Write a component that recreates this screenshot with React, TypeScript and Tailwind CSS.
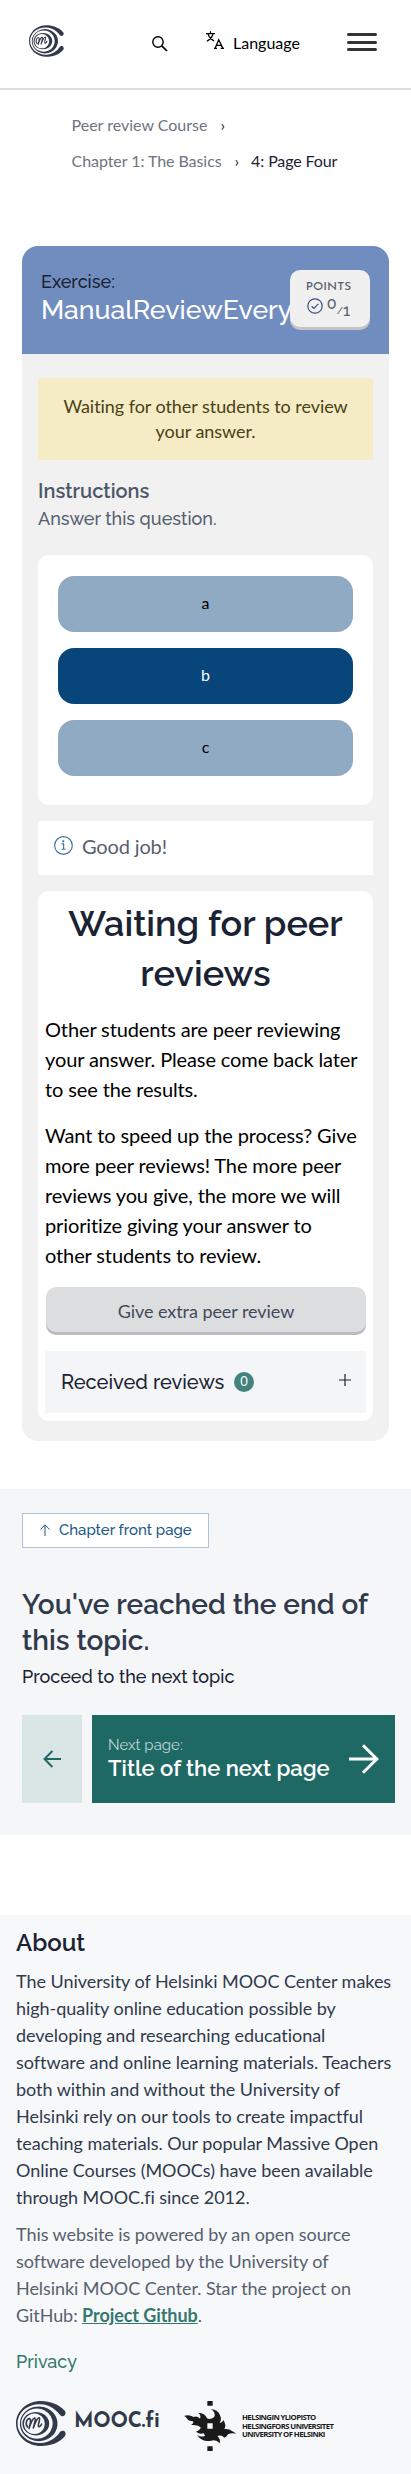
import React from "react";

function MoocMark({ className }: { className: string }) {
  return (
    <svg viewBox="0 0 50 45" className={className} fill="#303a4b" aria-hidden="true">
      <path d="M48.5 14.5 C50 13 49.8 11 48.5 9.5 C43 3.5 34 0 25 0 C11 0 0 10 0 22.5 C0 35 11 45 25 45 C35 45 44 41.5 49 35 C50.2 33 49.6 31 48 30 C46.3 29.2 44.6 30 43.6 31.5 C39.5 37.5 33 41.6 25 42 C12 42.6 1.6 33.5 1.6 22.5 C1.6 11 12 2.6 25 3.2 C33 3.6 39.5 8 43.6 13.4 C45 15.2 47 15.8 48.5 14.5 Z" />
      <path fillRule="evenodd" d="M22.7 5.4 a18.8 17.4 0 1 0 .01 0 Z M20.9 7.4 a15.8 15.2 0 1 1 -.01 0 Z" />
      <path fillRule="evenodd" d="M19.8 11 a13.4 11.7 0 1 0 .01 0 Z M18.4 12.6 a10.4 10.2 0 1 1 -.01 0 Z" />
      <path d="M11.5 26 C8.8 23 10.8 17.5 13.5 17.5 C15.5 18 14.2 23 13 27.5 C14.5 22.5 17.2 16.5 18.8 17 C20.3 17.8 18 23 17.3 27 C18.8 22.5 21.6 16.2 23.3 16.8 C24.8 18 21.2 24.5 22.6 25.6 C23.5 26.2 24.8 24.8 25.6 23" fill="none" stroke="#303a4b" strokeWidth="1.6" strokeLinecap="round" strokeLinejoin="round" />
    </svg>
  );
}

function HelsinkiMark() {
  return (
    <svg viewBox="39 63 156 150" className="h-[50px] w-[52px]" fill="#1a1a1a" aria-hidden="true">
      <path d="M109 63h16v14h-16zM109 199h16v14h-16z" />
      <path
        fillRule="evenodd"
        d="M39 108 Q54 103 68 111 Q78 107 87 116 Q91 106 82 98 Q102 99 108 115 Q118 120 130 111 Q135 98 120 87 Q141 89 147 106 Q153 118 146 129 Q155 128 157 120 Q167 134 160 147 Q176 146 184 154 Q190 156 195 161 Q181 158 171 163 Q168 170 160 173 Q152 164 139 168 Q150 178 146 190 Q136 178 121 182 Q94 188 78 165 Q92 173 102 167 L98 160 Q85 164 75 155 Q88 151 89 142 Q78 133 60 135 Q69 130 66 124 Q52 124 47 114 Q44 110 39 108 Z M109 130 v16 h16 v-16 Z"
      />
    </svg>
  );
}

const options = [
  { label: "a", selected: false },
  { label: "b", selected: true },
  { label: "c", selected: false },
];

function Header() {
  return (
    <header className="flex h-[90px] border-b-2 border-[#dddddd] pl-[29px]">
      <MoocMark className="mt-[25px] h-8 w-[35px]" />
      <svg viewBox="0 0 16 16" className="ml-[88px] mt-9 size-4" fill="none" stroke="#000" strokeWidth="1.4">
        <circle cx="6" cy="6" r="5.2" />
        <path d="M9.8 9.8L15 15" strokeWidth="1.7" />
      </svg>
      <svg viewBox="0 0 18 18" className="ml-[38px] mt-[31px] size-[18px]" fill="none" stroke="#000" strokeWidth="1.2">
        <path d="M0 2.6H9M4.5 .3V2.6M1.9 2.8C3 6.4 5.2 8.6 8.2 10M7.1 2.8C6 6.4 4 8.8 .8 10.2" />
        <path d="M9 17.4L12.7 8.8L16.9 17.4M10.2 14.4H15.2M8 17.3H11M14.6 17.3H18" strokeWidth="1.3" />
      </svg>
      <span className="ml-[9px] mt-[31px] w-[114px] text-[16px] leading-6 text-black">Language</span>
      <div className="mt-[33px] flex h-[18px] w-[30px] flex-col justify-between">
        <i className="h-[3px] rounded-full bg-[#333]" />
        <i className="h-[3px] rounded-full bg-[#333]" />
        <i className="h-[3px] rounded-full bg-[#333]" />
      </div>
    </header>
  );
}

function Breadcrumbs() {
  return (
    <nav className="flex h-[156px] flex-col pl-[71.5px] pt-[17px] text-[16px] leading-9 text-[#6d7480]">
      <div className="flex">
        <span>Peer review Course</span>
        <span className="ml-[13px] text-[#1a2333]">›</span>
      </div>
      <div className="flex">
        <span className="tracking-[-0.06px]">Chapter 1: The Basics</span>
        <span className="ml-[13px] text-[#1a2333]">›</span>
        <span className="ml-3 tracking-[-0.12px] text-[#1a2333]">4: Page Four</span>
      </div>
    </nav>
  );
}

function ExerciseHeader() {
  return (
    <div className="flex h-[108px] bg-[#718dbf] pl-5 pt-6 font-['Raleway','Lato',sans-serif]">
      <div className="w-[248px] shrink-0 whitespace-nowrap pt-px">
        <div className="-ml-px text-[18px] font-medium leading-[22px] text-[#1a2333]">Exercise:</div>
        <div className="-ml-px text-[26.6px] font-medium leading-[34px] text-white">ManualReviewEveryone</div>
      </div>
      <div className="relative flex h-[57px] w-20 shrink-0 flex-col items-center rounded-[10px] bg-[#f0f0f0] pr-[3px] pt-[9px] font-medium text-[#57606f] shadow-[0_3px_0_#c4c4c4]">
        <span className="font-['Josefin_Sans','Lato',sans-serif] text-[12px] leading-4">POINTS</span>
        <div className="mt-[3px] flex h-5">
          <svg viewBox="0 0 16 16" className="size-4" fill="none" stroke="#394f82" strokeWidth="1.2">
            <circle cx="8" cy="8" r="7.2" />
            <path d="M4.6 8.2L7 10.4L11.4 5.8" />
          </svg>
          <span className="-mt-0.5 ml-1 text-[16px] leading-4">0</span>
          <span className="pt-[5px] text-[10px] leading-4">/</span>
          <span className="pt-[5px] text-[16px] leading-4">1</span>
        </div>
      </div>
    </div>
  );
}

function PeerReviewPanel() {
  return (
    <div className="mt-4 h-[530px] rounded-[10px] bg-white px-[7px] pt-[7px]">
      <h2 className="text-center font-['Raleway','Lato',sans-serif] text-[36px] font-semibold leading-[50px] text-[#1a2333]">
        Waiting for peer
        <br />
        reviews
      </h2>
      <div className="mt-4 whitespace-nowrap text-[20px] leading-[30px] tracking-[-0.12px] text-black">
        <p>
          Other students are peer reviewing
          <br />
          your answer. Please come back later
          <br />
          to see the results.
        </p>
        <p className="mt-4">
          Want to speed up the process? Give
          <br />
          more peer reviews! The more peer
          <br />
          reviews you give, the more we will
          <br />
          prioritize giving your answer to
          <br />
          other students to review.
        </p>
      </div>
      <button className="ml-px mt-[17px] block h-[45px] w-80 rounded-[10px] bg-[#dcdddf] pt-[3px] text-[18px] tracking-[-0.06px] text-[#414b5b] shadow-[0_3px_0_#babbc5]">
        Give extra peer review
      </button>
      <div className="mt-[19px] flex h-[62px] items-center bg-[#f4f5f7] pl-4 pr-[15px]">
        <span className="w-[165px] font-['Raleway','Lato',sans-serif] text-[20px] font-medium text-[#1a2333]">Received reviews</span>
        <span className="ml-2 flex size-5 items-center justify-center rounded-full bg-[#44827d] pb-[3px] text-[13px] leading-5 text-white">0</span>
        <svg viewBox="0 0 12 12" className="mb-1 ml-auto size-3" stroke="#1a2333" strokeWidth="1.2">
          <path d="M6 0V12M0 6H12" />
        </svg>
      </div>
    </div>
  );
}

function Exercise() {
  return (
    <section className="mx-[22px] h-[1195px] overflow-hidden rounded-2xl bg-[#f1f1f1]">
      <ExerciseHeader />
      <div className="px-4 pt-6">
        <div className="flex h-[82px] items-center justify-center rounded-[3px] bg-[#f5ecc5] text-center text-[18px] leading-[25.4px] tracking-[-0.05px] text-[#4a4115]">
          <p>
            Waiting for other students to review
            <br />
            your answer.
          </p>
        </div>
        <h3 className="mt-4 font-['Raleway','Lato',sans-serif] text-[20px] font-semibold leading-[30px] text-[#4c5868]">
          Instructions
        </h3>
        <p className="font-['Raleway','Lato',sans-serif] text-[18px] font-medium leading-[25px] text-[#57606f]">
          Answer this question.
        </p>
        <div className="mt-6 flex h-[250px] flex-col gap-4 rounded-[10px] bg-white px-5 pt-[21px]">
          {options.map((option) => (
            <button
              key={option.label}
              className={
                option.selected
                  ? "h-14 shrink-0 rounded-2xl bg-[#08457a] pb-0.5 text-[16px] text-white"
                  : "h-14 shrink-0 rounded-2xl bg-[#91aac4] pb-0.5 text-[16px] text-black"
              }
            >
              {option.label}
            </button>
          ))}
        </div>
        <div className="mt-4 flex h-[54px] bg-white pl-4 pt-[15px]">
          <svg viewBox="0 0 20 20" className="-ml-px size-[19px] overflow-visible" fill="none" stroke="#3b6fa3" strokeWidth="1.2">
            <circle cx="11" cy="10" r="9.3" />
            <path d="M9 8.3H11.2V14M9 14H13.2" />
            <circle cx="10.8" cy="5.6" r=".6" fill="#3b6fa3" />
          </svg>
          <span className="-mt-0.5 ml-2.5 text-[20px] leading-6 tracking-[-0.15px] text-[#57606f]">Good job!</span>
        </div>
        <PeerReviewPanel />
      </div>
    </section>
  );
}

function NextTopic() {
  return (
    <section className="mt-12 h-[346px] bg-[#f5f6f8] pl-[22px] pr-4 pt-6 font-['Raleway','Lato',sans-serif]">
      <a className="flex h-[35px] w-[187px] items-center border border-[#aec3d8] bg-white pl-[17px] text-[15px] font-medium text-[#215887]">
        <svg viewBox="0 0 10 12" className="mb-0.5 mr-[9px] h-3 w-2.5" fill="none" stroke="#215887" strokeWidth="1">
          <path d="M5 12V1M.4 5.5L5 .8L9.6 5.5" />
        </svg>
        Chapter front page
      </a>
      <h2 className="mt-[39px] whitespace-nowrap text-[28px] font-semibold leading-9 text-[#303a4b]">
        You&#39;ve reached the end of
        <br />
        this topic.
      </h2>
      <p className="mt-1 text-[18px] font-medium leading-7 text-[#1a2333]">Proceed to the next topic</p>
      <div className="mt-6 flex h-[88px] gap-2.5">
        <a className="flex w-[60px] items-center justify-center bg-[#dae6e5]">
          <svg viewBox="0 0 18 18" className="size-[18px]" fill="none" stroke="#1f6964" strokeWidth="2">
            <path d="M18 9H1.6M9.4 1L1.5 9L9.4 17" />
          </svg>
        </a>
        <a className="flex w-[303px] bg-[#1f6964] pl-4 pt-[18px] text-white">
          <div className="w-[241px] whitespace-nowrap">
            <div className="text-[15px] leading-6 text-[#bfd6d3]">Next page:</div>
            <div className="text-[22px] font-semibold leading-[22px]">Title of the next page</div>
          </div>
          <svg viewBox="0 0 30 30" className="mt-[11px] size-[30px]" fill="none" stroke="#fff" strokeWidth="3">
            <path d="M0 15H28M14 1.2L27.8 15L14 28.8" />
          </svg>
        </a>
      </div>
    </section>
  );
}

function Footer() {
  return (
    <footer className="mt-20 h-[559px] bg-[#f7f8fa] pl-4 pt-2.5">
      <h2 className="font-['Raleway','Lato',sans-serif] text-[24px] font-semibold leading-9 text-[#1a2333]">About</h2>
      <p className="mt-[7px] whitespace-nowrap text-[18px] leading-[27px] tracking-[-0.04px] text-[#303a4b]">
        The University of Helsinki MOOC Center makes
        <br />
        high-quality online education possible by
        <br />
        developing and researching educational
        <br />
        software and online learning materials. Teachers
        <br />
        both within and without the University of
        <br />
        Helsinki rely on our tools to create impactful
        <br />
        teaching materials. Our popular Massive Open
        <br />
        Online Courses (MOOCs) have been available
        <br />
        through MOOC.fi since 2012.
      </p>
      <p className="mt-2.5 whitespace-nowrap text-[18px] leading-[27px] tracking-[-0.07px] text-[#57606f]">
        This website is powered by an open source
        <br />
        software developed by the University of
        <br />
        Helsinki MOOC Center. Star the project on
        <br />
        GitHub: <a className="font-bold text-[#34786f] underline">Project Github</a>.
      </p>
      <a className="mt-[19px] block font-['Raleway','Lato',sans-serif] text-[18px] font-medium leading-[27px] text-[#34786f]">
        Privacy
      </a>
      <div className="mt-[26px] flex h-[50px]">
        <MoocMark className="h-[45px] w-[50px]" />
        <span className="ml-[8px] mt-[10px] w-[110px] font-['Josefin_Sans','Lato',sans-serif] text-[20.5px] font-bold leading-[23px] tracking-[-0.2px] text-[#303a4b]">
          MOOC.fi
        </span>
        <HelsinkiMark />
        <div className="ml-[6px] mt-[12px] whitespace-nowrap font-['Open_Sans'] text-[7.8px] font-bold leading-[8.5px] tracking-[-0.6px] text-[#1a1a1a]">
          HELSINGIN YLIOPISTO
          <br />
          HELSINGFORS UNIVERSITET
          <br />
          UNIVERSITY OF HELSINKI
        </div>
      </div>
    </footer>
  );
}

export default function App() {
  return (
    <div className="min-h-[2474px] w-[411px] overflow-hidden bg-white font-['Lato',sans-serif] [font-variant-ligatures:no-common-ligatures]">
      <Header />
      <Breadcrumbs />
      <Exercise />
      <NextTopic />
      <Footer />
    </div>
  );
}
